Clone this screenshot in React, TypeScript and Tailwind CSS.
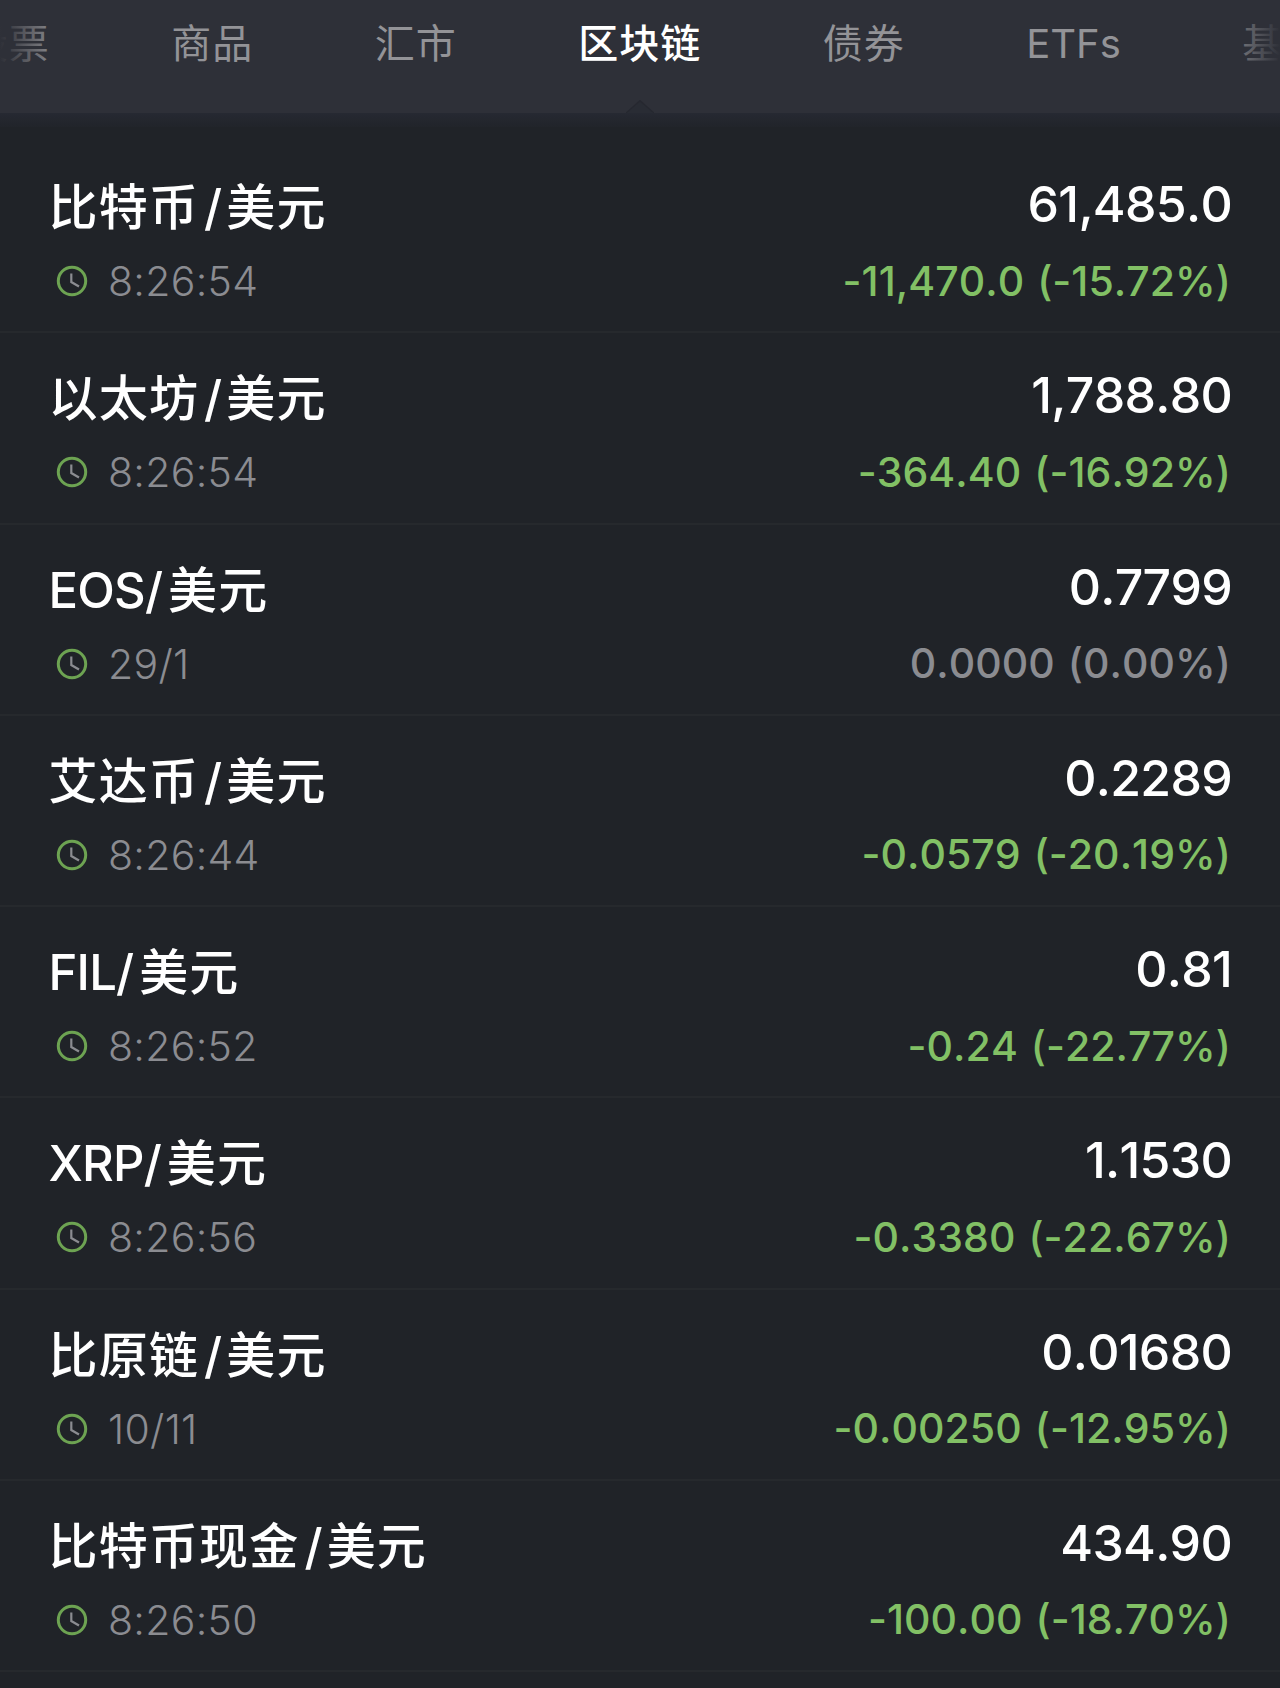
const tabs = ["股票", "商品", "汇市", "区块链", "债券", "ETFs", "基金"];
const activeTab = "区块链";

const quotes = [
  { base: "比特币", time: "8:26:54", price: "61,485.0", change: "-11,470.0 (-15.72%)" },
  { base: "以太坊", time: "8:26:54", price: "1,788.80", change: "-364.40 (-16.92%)" },
  { base: "EOS", time: "29/1", price: "0.7799", change: "0.0000 (0.00%)" },
  { base: "艾达币", time: "8:26:44", price: "0.2289", change: "-0.0579 (-20.19%)" },
  { base: "FIL", time: "8:26:52", price: "0.81", change: "-0.24 (-22.77%)" },
  { base: "XRP", time: "8:26:56", price: "1.1530", change: "-0.3380 (-22.67%)" },
  { base: "比原链", time: "10/11", price: "0.01680", change: "-0.00250 (-12.95%)" },
  { base: "比特币现金", time: "8:26:50", price: "434.90", change: "-100.00 (-18.70%)" },
];

const isLatin = (text: string) => /^[A-Za-z]+$/.test(text);

function ClockIcon() {
  return (
    <svg viewBox="0 0 32 32" className="h-8 w-8 shrink-0" fill="none">
      <circle cx="16" cy="16" r="13.7" stroke="#6da352" strokeWidth="3" />
      <path d="M15.3 8.5V17L23 21.5" stroke="#8b8c91" strokeWidth="2.2" />
    </svg>
  );
}

function TabBar() {
  return (
    <nav className="relative h-[113px] overflow-hidden bg-[#2e3038]">
      <div className="flex justify-center gap-[121.5px] whitespace-nowrap pl-[12px] pt-4 text-[40px] leading-[56px]">
        {tabs.map((tab) => (
          <span
            key={tab}
            className={`${tab === activeTab ? "font-medium text-white" : "text-[#939397]"} ${
              isLatin(tab) ? "tracking-normal" : "tracking-[1px]"
            }`}
          >
            {tab}
          </span>
        ))}
      </div>
      {/* edge fades over the scrolled tabs */}
      <div className="absolute inset-y-0 left-0 w-[60px] bg-gradient-to-r from-[#2e3038] to-transparent" />
      <div className="absolute inset-y-0 right-0 w-[60px] bg-gradient-to-l from-[#2e3038] to-transparent" />
      <svg viewBox="0 0 28 13" className="absolute bottom-0 left-[626px] h-[13px] w-7">
        <path d="M0 13L14 0L28 13Z" fill="#292c34" />
        <path d="M0 13L14 0.7L28 13" fill="none" stroke="#262830" strokeWidth="1.2" />
      </svg>
    </nav>
  );
}

function QuoteRow({ base, time, price, change }: (typeof quotes)[number]) {
  const latin = isLatin(base);
  return (
    <li className="flex h-[191.25px] justify-between border-b-2 border-[#26292d] pl-[48.5px] pr-[49px]">
      <div className="pt-[34px]">
        <div className="flex h-[64px] text-[49px] font-medium leading-[64px] text-white">
          <span className={latin ? "tracking-[-0.8px]" : "tracking-[1.2px]"}>{base}</span>
          <span className={latin ? "mr-[5px]" : "ml-[5px] mr-[4px]"}>/</span>
          <span className="tracking-[1.2px]">美元</span>
        </div>
        <div className="mt-[13px] flex h-[56px] items-center pl-[7.5px]">
          <ClockIcon />
          <span className="ml-[20px] text-[41px] font-light leading-[56px] tracking-[0.3px] text-[#8b8c91]">{time}</span>
        </div>
      </div>
      <div className="pt-[30px] text-right">
        <div className="-mr-px h-[64px] text-[50px] font-medium leading-[64px] tracking-[-0.7px] text-white [font-kerning:none]">
          {price}
        </div>
        <div
          className={`mt-[16.5px] text-[41px] font-medium leading-[56px] tracking-[0.05px] [font-kerning:none] [word-spacing:2px] ${
            change.startsWith("-") ? "text-[#82c065]" : "text-[#8b8c91]"
          }`}
        >
          {change}
        </div>
      </div>
    </li>
  );
}

export default function App() {
  return (
    <div className="h-[1688px] w-[1280px] overflow-hidden bg-[#202328] font-['Inter','Noto_Sans_CJK_SC',sans-serif]">
      <TabBar />
      <div className="h-[14px] bg-gradient-to-b from-[#262932] to-[#21242a]" />
      <ul className="pt-[15px]">
        {quotes.map((quote) => (
          <QuoteRow key={quote.base} {...quote} />
        ))}
      </ul>
    </div>
  );
}
